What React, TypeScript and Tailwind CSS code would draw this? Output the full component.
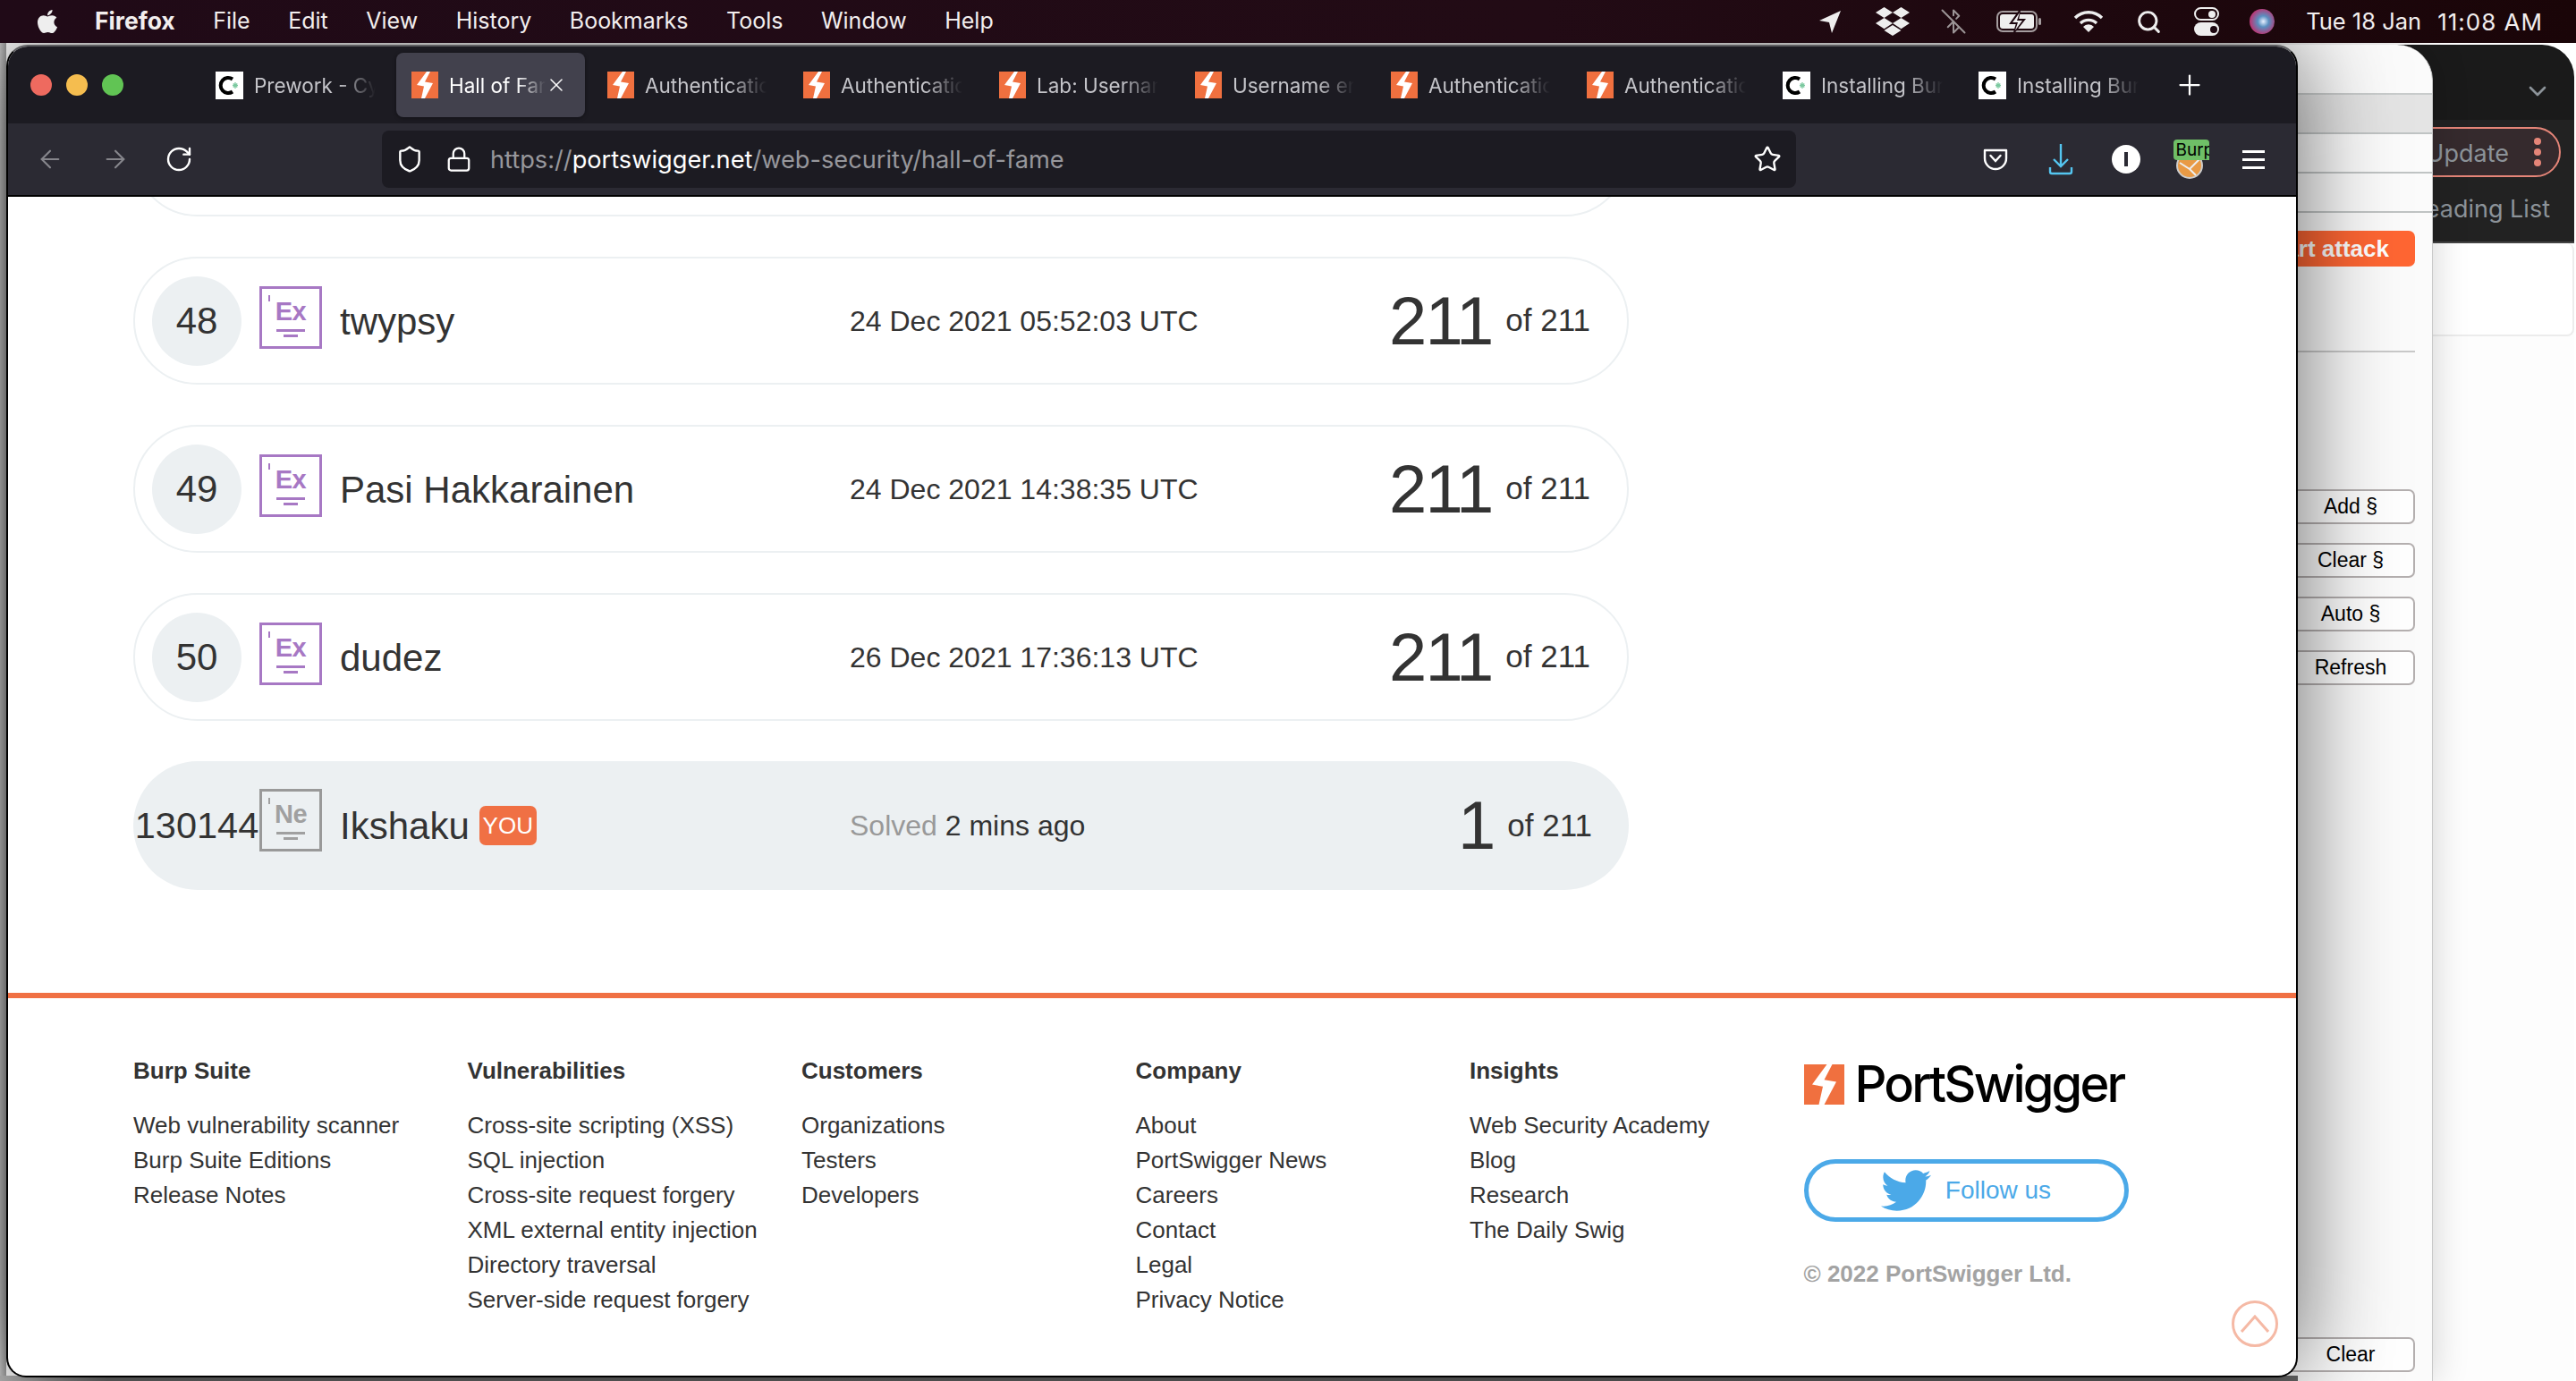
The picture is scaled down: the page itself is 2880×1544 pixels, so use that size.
import React from "react";
import { ArrowLeft, ArrowRight, RotateCw, Shield, Lock, Star, X, Plus, ChevronDown, Search, BluetoothOff } from "lucide-react";
import { FaApple, FaDropbox, FaTwitter } from "react-icons/fa";

const bolt = "M17 0 L6 15 L14 16.5 L11 30 L15 30 L24 13 L15 11.5 L21 0 Z";

function BurpIcon({ size = 30 }: { size?: number }) {
  return (
    <svg width={size} height={size} viewBox="0 0 30 30" className="shrink-0">
      <rect width="30" height="30" fill="#f0703f" />
      <path d={bolt} fill="#fff" />
    </svg>
  );
}

function CIcon() {
  return (
    <svg width="31" height="31" viewBox="0 0 31 31" className="shrink-0">
      <rect width="31" height="31" fill="#fff" />
      <path d="M19 8.5 A8.5 8.5 0 1 0 19 22.5" fill="none" stroke="#000" strokeWidth="4" />
      <path d="M22 12 v7 M19 15.5 h6 M19.8 13.4 l4.4 4.2 M24.2 13.4 l-4.4 4.2" stroke="#7cc9a0" strokeWidth="1.3" />
    </svg>
  );
}

const tabs: { t: string; k: "c" | "b"; active?: boolean }[] = [
  { t: "Prework - Cyber", k: "c" },
  { t: "Hall of Fame", k: "b", active: true },
  { t: "Authentication", k: "b" },
  { t: "Authentication", k: "b" },
  { t: "Lab: Username", k: "b" },
  { t: "Username enum", k: "b" },
  { t: "Authentication", k: "b" },
  { t: "Authentication", k: "b" },
  { t: "Installing Burp", k: "c" },
  { t: "Installing Burp", k: "c" },
];

function Tab({ t, k, active }: { t: string; k: "c" | "b"; active?: boolean }) {
  return (
    <div className="w-[219px] h-[72px] shrink-0 px-[4px]">
      <div className={`h-full rounded-[8px] flex items-center pl-[17px] ${active ? "bg-[#42414d] shadow-[0_1px_4px_rgba(0,0,0,0.4)]" : ""}`}>
        {k === "b" ? <BurpIcon size={30} /> : <CIcon />}
        <span
          className={`ml-[12px] pt-[1px] overflow-hidden whitespace-nowrap text-[22.5px] [mask-image:linear-gradient(to_right,black_70%,transparent)] ${
            active ? "text-white w-[108px]" : "text-[#c4c4c9] w-[136px]"
          }`}
        >
          {t}
        </span>
        {active && <X size={24} strokeWidth={1.5} className="text-white" />}
      </div>
    </div>
  );
}

function Element({ sym, muted }: { sym: string; muted?: boolean }) {
  const c = muted ? "bg-[#a0a0a0]" : "bg-[#a778c4]";
  return (
    <div
      className={`relative w-[70px] h-[70px] shrink-0 self-start mt-[31px] ml-[20px] border-[3px] flex flex-col items-center pt-[12px] ${
        muted ? "border-[#999] text-[#a0a0a0]" : "border-[#a778c4] text-[#a778c4]"
      }`}
    >
      <span className={`absolute left-[7px] top-[7px] w-[2px] h-[7px] ${c}`} />
      <span className="text-[29px] font-bold leading-[26px] tracking-[-0.5px]">{sym}</span>
      <span className={`mt-[7px] w-[32px] h-[3px] ${c}`} />
      <span className={`mt-[3px] w-[16px] h-[3px] ${c}`} />
    </div>
  );
}

function Score({ score }: { score: number }) {
  return (
    <div className="ml-auto pr-[41px] flex items-center gap-[15px]">
      <span className="text-[76px] leading-none tracking-[-2px]">{score}</span>
      <span className="text-[35px]">of 211</span>
    </div>
  );
}

function Row({ rank, name, date, score }: { rank: number; name: string; date: string; score: number }) {
  return (
    <div className="w-[1672px] h-[143px] rounded-full border-2 border-[#ecf0f2] flex items-center mb-[45px]">
      <div className="w-[100px] h-[100px] ml-[19px] shrink-0 rounded-full bg-[#ecf0f2] flex items-center justify-center text-[42px]">{rank}</div>
      <Element sym="Ex" />
      <div className="ml-[20px] pt-[2px] w-[570px] shrink-0 text-[42px] whitespace-nowrap">{name}</div>
      <div className="text-[32px] whitespace-nowrap">{date}</div>
      <Score score={score} />
    </div>
  );
}

const columns: { h: string; l: string[] }[] = [
  { h: "Burp Suite", l: ["Web vulnerability scanner", "Burp Suite Editions", "Release Notes"] },
  { h: "Vulnerabilities", l: ["Cross-site scripting (XSS)", "SQL injection", "Cross-site request forgery", "XML external entity injection", "Directory traversal", "Server-side request forgery"] },
  { h: "Customers", l: ["Organizations", "Testers", "Developers"] },
  { h: "Company", l: ["About", "PortSwigger News", "Careers", "Contact", "Legal", "Privacy Notice"] },
  { h: "Insights", l: ["Web Security Academy", "Blog", "Research", "The Daily Swig"] },
];

function BackButton({ t, cls }: { t: string; cls: string }) {
  return (
    <div className={`self-end w-[142px] h-[39px] mr-[19px] pr-[2px] rounded-[7px] border-2 border-[#b5b0b0] bg-white flex items-center justify-center text-[23px] text-black ${cls}`}>{t}</div>
  );
}

export default function App() {
  return (
    <div className="relative w-[2880px] h-[1544px] overflow-hidden bg-white [font-family:'Liberation_Sans',Arial,sans-serif] text-[#333]">
      {/* farthest window */}
      <div className="absolute left-[2500px] top-[50px] w-[378px] h-[1494px] rounded-tr-[36px] overflow-hidden bg-[#fdfdfd] flex flex-col [font-family:Inter,sans-serif]">
        <div className="h-[84px] bg-[#1a1a1a] flex justify-end items-end pb-[16px] pr-[25px]">
          <ChevronDown size={32} strokeWidth={2} className="text-[#8c9399]" />
        </div>
        <div className="h-[138px] bg-[#222] border-b-2 border-[#444] flex flex-col items-end pt-[8px] pr-[15px]">
          <div className="w-[260px] h-[56px] rounded-full border-2 border-[#e58578] bg-[#352a2d] flex items-center justify-end pr-[20px] gap-[28px]">
            <span className="text-[27px] text-[#8c9399] leading-none pt-[2px]">Update</span>
            <span className="flex flex-col">
              <span className="w-[8px] h-[8px] rounded-full bg-[#e58578]" />
              <span className="w-[8px] h-[8px] rounded-full bg-[#e58578] mt-[4px]" />
              <span className="w-[8px] h-[8px] rounded-full bg-[#e58578] mt-[4px]" />
            </span>
          </div>
          <span className="mt-[22px] pr-[12px] text-[27px] text-[#8c9399] leading-none">Reading List</span>
        </div>
        <div className="h-[104px] rounded-[8px] bg-white border-b-2 border-r-2 border-[#ececec]" />
      </div>

      {/* burp window */}
      <div className="absolute left-[2300px] top-[50px] w-[420px] h-[1494px] rounded-tr-[40px] bg-[#fbfbfb] border-r border-[#c8c8c8] shadow-[0_0_40px_rgba(0,0,0,0.18)] flex flex-col">
        <div className="h-[54px] shrink-0" />
        <div className="h-[44px] shrink-0 bg-[#e4e4e4] border-t-2 border-[#c9cccc]" />
        <div className="h-[44px] shrink-0 border-t-2 border-[#c0c4c4]" />
        <div className="h-[44px] shrink-0 border-t-2 border-[#c0c4c4]" />
        <div className="h-[22px] shrink-0 border-t-2 border-[#c0c4c4]" />
        <div className="self-end w-[190px] h-[40px] mr-[19px] rounded-[7px] bg-[#ff6633] text-white font-bold text-[26px] flex items-center justify-end pr-[29px]">Start attack</div>
        <div className="self-end w-[300px] mr-[19px] mt-[94px] border-t-2 border-[#c9c9c9]" />
        <div className="flex flex-col mt-[153px] gap-[21px]">
          <BackButton t="Add §" cls="" />
          <BackButton t="Clear §" cls="" />
          <BackButton t="Auto §" cls="" />
          <BackButton t="Refresh" cls="" />
        </div>
        <BackButton t="Clear" cls="mt-auto mb-[10px]" />
      </div>

      {/* strips left of and below the main window */}
      <div className="absolute left-0 top-[48px] w-[7px] h-[1496px] bg-gradient-to-r from-[#c4c4c4] to-[#9a9a9a]" />
      <div className="absolute left-0 top-[1538px] w-[2569px] h-[6px] bg-[linear-gradient(to_right,#b8b8b8,#707070_120px,#666_100%)]" />

      {/* main browser window */}
      <div className="absolute left-[7px] top-[50px] w-[2562px] h-[1490px] rounded-t-[24px] rounded-b-[22px] overflow-hidden border-2 border-black border-t-[#5f5f62] bg-white shadow-[0_0_110px_rgba(0,0,0,0.6)] flex flex-col">
        <div className="h-[86px] shrink-0 bg-[#1c1b22] flex items-center pl-[25px] [font-family:Inter,sans-serif]">
          <span className="w-[24px] h-[24px] rounded-full bg-[#ee6a5f]" />
          <span className="ml-[16px] w-[24px] h-[24px] rounded-full bg-[#f5bd4f]" />
          <span className="ml-[16px] w-[24px] h-[24px] rounded-full bg-[#61c454]" />
          <div className="ml-[82px] flex items-center">
            {tabs.map((t, i) => (
              <Tab key={i} {...t} />
            ))}
          </div>
          <div className="w-[76px] flex justify-center">
            <Plus size={36} strokeWidth={1.5} className="text-white" />
          </div>
        </div>

        <div className="h-[80px] shrink-0 bg-[#2b2a33] flex items-center pl-[31px] [font-family:Inter,sans-serif]">
          <ArrowLeft size={32} strokeWidth={1.6} className="text-[#85858b]" />
          <ArrowRight size={32} strokeWidth={1.6} className="ml-[41px] text-[#85858b]" />
          <RotateCw size={32} strokeWidth={1.8} className="ml-[39px] text-white" />
          <div className="ml-[211px] w-[1581px] h-[64px] rounded-[8px] bg-[#1c1b22] flex items-center pl-[15px] pr-[16px]">
            <Shield size={32} strokeWidth={1.8} className="text-white" />
            <Lock size={30} strokeWidth={1.8} className="ml-[24px] text-white" />
            <span className="ml-[20px] pt-[2px] text-[27.2px] text-[#97979c] whitespace-nowrap">
              https://<span className="text-white">portswigger.net</span>/web-security/hall-of-fame
            </span>
            <Star size={32} strokeWidth={1.8} className="ml-auto text-white" />
          </div>
          <div className="ml-[186px] flex items-center">
            <div className="w-[73px] flex justify-center">
              <svg width="30" height="30" viewBox="0 0 30 30" fill="none" stroke="#fff" strokeWidth="2.4">
                <path d="M3 5 H27 V14 A12 12 0 0 1 3 14 Z" strokeLinejoin="round" />
                <path d="M9.5 11 L15 17 L20.5 11" strokeLinecap="round" />
              </svg>
            </div>
            <div className="w-[73px] flex justify-center">
              <svg width="30" height="36" viewBox="0 0 30 36" fill="none" stroke="#54c5f0" strokeWidth="2.4">
                <path d="M15 1 V26 M7 18 L15 26 L23 18" />
                <path d="M3 27 V32 A2 2 0 0 0 5 34 H25 A2 2 0 0 0 27 32 V27" />
              </svg>
            </div>
            <div className="w-[73px] flex justify-center">
              <span className="w-[32px] h-[32px] rounded-full bg-white flex items-center justify-center">
                <span className="w-[4px] h-[16px] bg-[#2b2a33]" />
              </span>
            </div>
            <div className="w-[73px] flex justify-center">
              <div className="relative w-[40px] h-[44px]">
                <svg width="30" height="30" viewBox="0 0 30 30" className="absolute left-[3px] top-[14px]">
                  <circle cx="15" cy="15" r="14" fill="#e99a45" stroke="#ccc" strokeWidth="2" />
                  <path d="M4 12 L15 19 L26 8 M15 19 L22 26" fill="none" stroke="#eee" strokeWidth="2" />
                </svg>
                <span className="absolute left-0 top-0 w-[40px] h-[23px] rounded-t-[4px] rounded-bl-[4px] bg-[#6fbf67] overflow-hidden pl-[3px] text-[19px] leading-[23px] text-black whitespace-nowrap">Burp</span>
              </div>
            </div>
            <div className="w-[67px] flex flex-col items-center gap-[6px]">
              <span className="w-[25px] h-[3px] bg-white" />
              <span className="w-[25px] h-[3px] bg-white" />
              <span className="w-[25px] h-[3px] bg-white" />
            </div>
          </div>
        </div>
        <div className="h-[2px] shrink-0 bg-black" />

        <div className="relative flex-1 overflow-hidden">
          <div className="pl-[140px] -mt-[121px]">
            <div className="w-[1672px] h-[143px] rounded-full border-2 border-[#ecf0f2] mb-[45px]" />
            <Row rank={48} name="twypsy" date="24 Dec 2021 05:52:03 UTC" score={211} />
            <Row rank={49} name="Pasi Hakkarainen" date="24 Dec 2021 14:38:35 UTC" score={211} />
            <Row rank={50} name="dudez" date="26 Dec 2021 17:36:13 UTC" score={211} />
            <div className="w-[1672px] h-[144px] rounded-full bg-[#ecf0f2] flex items-center">
              <div className="w-[100px] ml-[21px] shrink-0 flex justify-center text-[41.5px]">130144</div>
              <Element sym="Ne" muted />
              <div className="ml-[20px] w-[570px] shrink-0 flex items-center text-[42px]">
                Ikshaku
                <span className="ml-[11px] w-[64px] h-[44px] rounded-[7px] bg-[#f07044] text-white text-[26px] flex items-center justify-center">YOU</span>
              </div>
              <div className="text-[32px] text-[#999]">
                Solved <span className="text-[#333]">2 mins ago</span>
              </div>
              <Score score={1} />
            </div>
          </div>

          <div className="mt-[115px] border-t-[6px] border-[#f07044] pt-[62px] pl-[140px] flex">
            {columns.map((c) => (
              <div key={c.h} className="w-[373.5px] shrink-0 text-[26px] leading-[39px] whitespace-nowrap">
                <div className="font-bold mb-[22px]">{c.h}</div>
                {c.l.map((l) => (
                  <div key={l}>{l}</div>
                ))}
              </div>
            ))}
            <div className="flex flex-col -mt-[1px]">
              <div className="flex items-center h-[70px]">
                <BurpIcon size={45} />
                <span className="ml-[12px] text-[56px] leading-none text-black font-medium tracking-[-2.8px] [font-family:Inter,sans-serif]">PortSwigger</span>
              </div>
              <div className="mt-[49px] w-[363px] h-[70px] rounded-full border-[5px] border-[#4ba9e8] flex items-center justify-center gap-[16px] text-[28px] text-[#4ba9e8]">
                <FaTwitter size={56} />
                Follow us
              </div>
              <div className="mt-[39px] text-[26px] font-bold text-[#a3a3a3]">© 2022 PortSwigger Ltd.</div>
            </div>
          </div>

          <div className="absolute right-[20px] bottom-[32px] w-[52px] h-[52px] rounded-full border-[3px] border-[#f5b9a5] flex items-center justify-center">
            <svg width="32" height="20" viewBox="0 0 32 20" fill="none" stroke="#f5b9a5" strokeWidth="3">
              <path d="M1 19 L16 2 L31 19" />
            </svg>
          </div>
        </div>
      </div>

      {/* menu bar */}
      <div className="absolute left-0 top-0 w-[2880px] h-[48px] bg-[linear-gradient(to_right,#200a17,#220b15_60%,#1a0508)] flex items-center text-[25px] text-[#f2eeee] [font-family:Inter,sans-serif]">
        <FaApple size={30} className="ml-[38px] text-[#eee]" />
        <div className="ml-[38px] flex items-center gap-[42.5px]">
          <span className="font-bold text-[26.5px]">Firefox</span>
          <span>File</span>
          <span>Edit</span>
          <span>View</span>
          <span>History</span>
          <span>Bookmarks</span>
          <span>Tools</span>
          <span>Window</span>
          <span>Help</span>
        </div>
        <div className="ml-auto flex items-center pr-[37px]">
          <div className="w-[70px] flex justify-center">
            <svg width="26" height="26" viewBox="0 0 26 26"><path d="M25 1 L1 12 L12 14 L15 26 Z" fill="#eee" /></svg>
          </div>
          <div className="w-[70px] flex justify-center"><FaDropbox size={38} className="text-[#eee]" /></div>
          <div className="w-[66px] flex justify-center"><BluetoothOff size={30} strokeWidth={1.6} className="text-[#9b9496]" /></div>
          <div className="w-[82px] flex justify-center">
            <svg width="52" height="26" viewBox="0 0 52 26" fill="none">
              <rect x="1" y="2" width="44" height="22" rx="6" stroke="#a59d9f" strokeWidth="2" />
              <rect x="4" y="5" width="38" height="16" rx="3" fill="#eee" />
              <path d="M26 1 L16 15 H23 L20 25 L31 11 H24 Z" fill="#1d0710" stroke="#1d0710" strokeWidth="2" />
              <path d="M26 3 L18 14 H24 L21 23 L29 12 H23 Z" fill="#eee" />
              <rect x="47" y="9" width="3" height="8" rx="1.5" fill="#a59d9f" />
            </svg>
          </div>
          <div className="w-[72px] flex justify-center">
            <svg width="34" height="26" viewBox="0 0 34 26" fill="none" stroke="#eee" strokeWidth="3.4">
              <path d="M2 9 A21 21 0 0 1 32 9" />
              <path d="M8 15 A13 13 0 0 1 26 15" />
              <path d="M17 25 L11 19 A8 8 0 0 1 23 19 Z" fill="#eee" stroke="none" />
            </svg>
          </div>
          <div className="w-[62px] flex justify-center"><Search size={29} strokeWidth={2.4} className="text-[#eee]" /></div>
          <div className="w-[68px] flex justify-center">
            <div className="w-[28px] flex flex-col gap-[2px]">
              <span className="h-[15px] rounded-full border-2 border-[#eee] flex items-center justify-end pr-[2px]"><span className="w-[8px] h-[8px] rounded-full bg-[#eee]" /></span>
              <span className="h-[15px] rounded-full bg-[#eee] flex items-center justify-end pr-[2px]"><span className="w-[8px] h-[8px] rounded-full bg-[#1d0710]" /></span>
            </div>
          </div>
          <div className="w-[56px] flex justify-center">
            <span className="w-[28px] h-[28px] rounded-full bg-[radial-gradient(circle_at_55%_50%,#e8f0ff_0%,#5a8fc0_30%,#b83a78_70%,#40504a_100%)]" />
          </div>
          <span className="ml-[21px] text-[25.5px]">Tue 18 Jan</span>
          <span className="ml-[18px] text-[26px] tracking-[1px]">11:08 AM</span>
        </div>
      </div>
    </div>
  );
}
